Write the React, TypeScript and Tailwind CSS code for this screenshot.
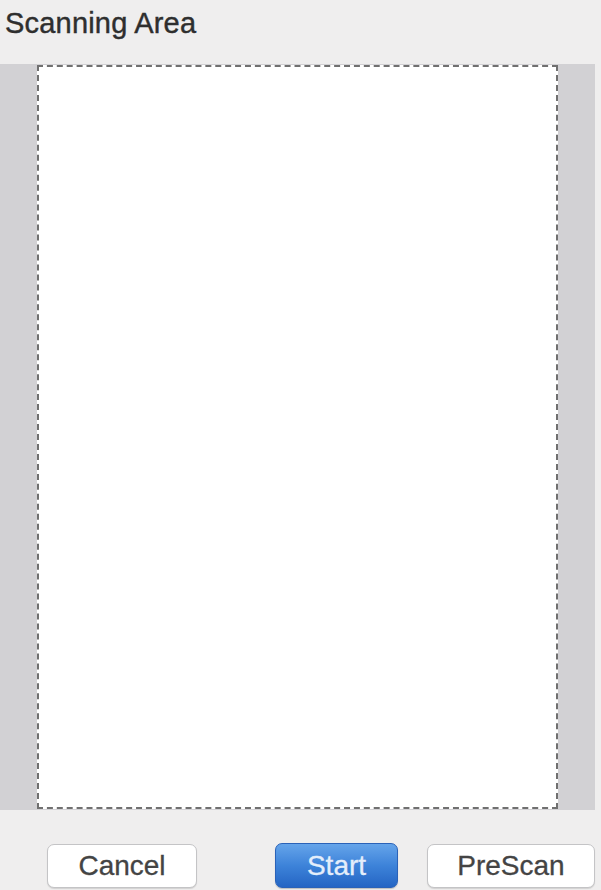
export default function App() {
  return (
    <div
      className="w-[601px] h-[890px] bg-[#efeeee] overflow-hidden"
      style={{ fontFamily: '"Liberation Sans", Arial, sans-serif' }}
    >
      {/* Title */}
      <div className="pt-[6px] pl-[5px] h-[64px]">
        <h1 className="text-[29px] leading-[34px] text-[#2e2e2e] tracking-[0.2px] [-webkit-text-stroke:0.4px_#2e2e2e]">
          Scanning Area
        </h1>
      </div>

      {/* Scan preview */}
      <div className="flex w-[595px] h-[746px] bg-[#d2d1d4]">
        <div className="w-[37px] shrink-0" />
        <div className="flex-1 h-[744px] mt-[1px] bg-white border-2 border-dashed border-[#707070]" />
        <div className="w-[37px] shrink-0" />
      </div>

      {/* Buttons */}
      <div className="flex items-center pl-[47px] mt-[33px]">
        <button className="w-[150px] h-[44px] rounded-[7px] bg-white border border-[#c4c4c6] shadow-[0_1px_1px_rgba(0,0,0,0.12)] text-[28px] text-[#444] leading-none [-webkit-text-stroke:0.3px_#444]">
          Cancel
        </button>
        <button className="ml-[78px] w-[123px] h-[45px] rounded-[7px] bg-gradient-to-b from-[#65a4ea] via-[#3d83d9] to-[#2565c4] border border-[#2a62b8] shadow-[0_1px_1px_rgba(0,0,0,0.2)] text-[28px] text-[#e4eefb] leading-none [-webkit-text-stroke:0.3px_#e4eefb]">
          Start
        </button>
        <button className="ml-[29px] w-[168px] h-[44px] rounded-[7px] bg-white border border-[#c4c4c6] shadow-[0_1px_1px_rgba(0,0,0,0.12)] text-[28px] text-[#444] leading-none [-webkit-text-stroke:0.3px_#444]">
          PreScan
        </button>
      </div>
    </div>
  );
}
